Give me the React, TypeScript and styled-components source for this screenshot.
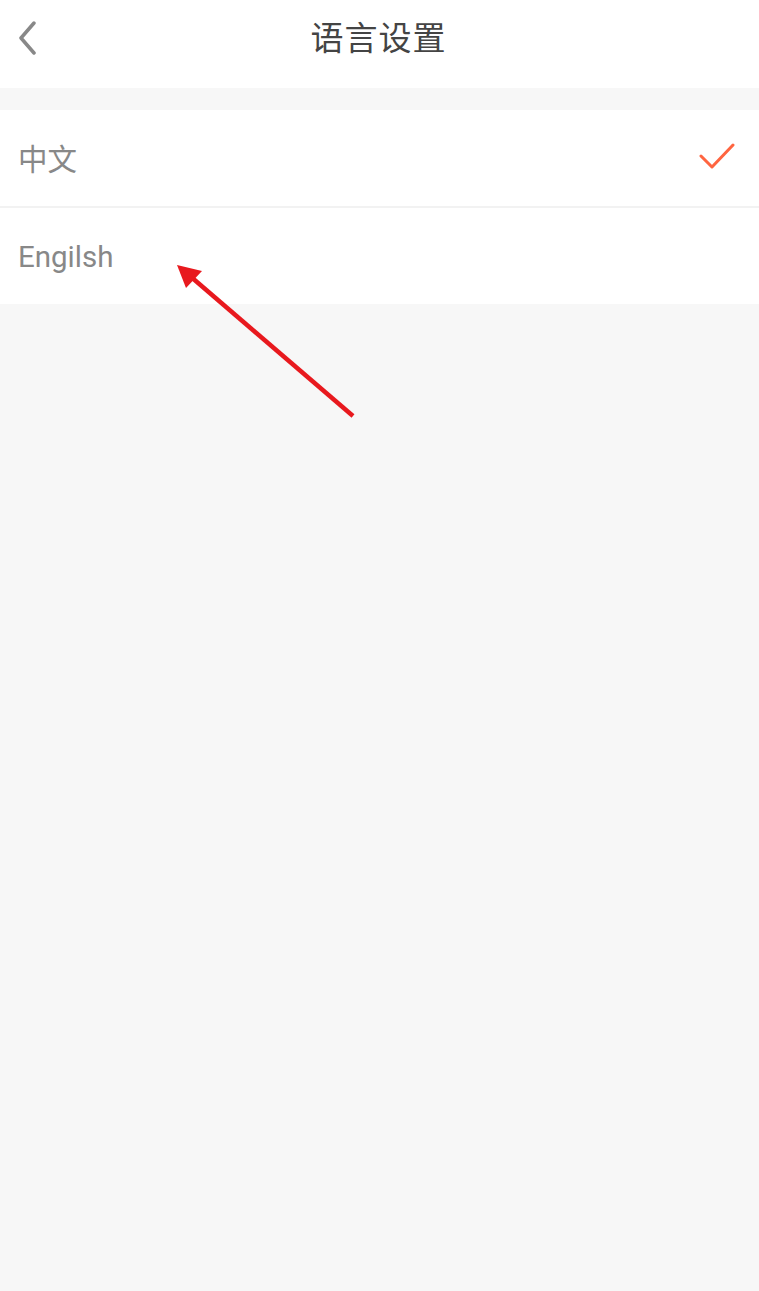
import React from 'react';
import styled, { createGlobalStyle } from 'styled-components';

const GlobalStyle = createGlobalStyle`
  html, body {
    margin: 0;
    padding: 0;
    background: #f7f7f7;
  }
  body {
    font-family: Roboto, "Noto Sans CJK SC", "Noto Sans", sans-serif;
  }
`;

const Page = styled.div`
  position: relative;
  min-height: 1291px;
  background: #f7f7f7;
`;

const Header = styled.header`
  position: relative;
  height: 88px;
  background: #ffffff;
  display: flex;
  align-items: center;
  justify-content: center;
`;

const BackButton = styled.button`
  position: absolute;
  left: 10px;
  top: 18px;
  width: 34px;
  height: 40px;
  padding: 0;
  border: none;
  background: transparent;
  display: flex;
  align-items: center;
  justify-content: center;
`;

const Title = styled.h1`
  margin: 0 0 0 -2px;
  margin-top: -16px;
  font-size: 33px;
  font-weight: 400;
  color: #444444;
  letter-spacing: 1px;
`;

const List = styled.ul`
  list-style: none;
  margin: 22px 0 0;
  padding: 0;
  background: #ffffff;
`;

const Row = styled.li<{ $last?: boolean }>`
  height: 96px;
  padding: 0 20px 0 18px;
  display: flex;
  align-items: center;
  justify-content: space-between;
  border-bottom: ${(p) => (p.$last ? 'none' : '2px solid #f2f2f2')};
`;

const Label = styled.span<{ $offset?: number }>`
  font-size: 29.5px;
  color: #888888;
  margin-top: ${(p) => p.$offset ?? 0}px;
`;

const Arrow = styled.svg`
  position: absolute;
  left: 0;
  top: 0;
  pointer-events: none;
`;

const Check = () => (
  <svg width="40" height="30" viewBox="0 0 40 30">
    <path d="M2 13 L13 24 L34 2" fill="none" stroke="#ff6540" strokeWidth="3" strokeLinecap="round" strokeLinejoin="round" />
  </svg>
);

const languages = [
  { label: '中文', selected: true, offset: -2 },
  { label: 'Engilsh', selected: false, offset: 2 },
];

export default function App() {
  return (
    <Page>
      <GlobalStyle />
      <Header>
        <BackButton aria-label="back">
          <svg width="22" height="34" viewBox="0 0 22 34">
            <path d="M18 2 L5 17 L18 32" fill="none" stroke="#888888" strokeWidth="3.5" strokeLinecap="round" strokeLinejoin="round" />
          </svg>
        </BackButton>
        <Title>语言设置</Title>
      </Header>
      <List>
        {languages.map((l, i) => (
          <Row key={l.label} $last={i === languages.length - 1}>
            <Label $offset={l.offset}>{l.label}</Label>
            {l.selected && <Check />}
          </Row>
        ))}
      </List>
      <Arrow width="759" height="1291" viewBox="0 0 759 1291">
        <line x1="353" y1="416" x2="190" y2="276" stroke="#e8191e" strokeWidth="4.5" />
        <polygon points="177,265 186,288 202,271" fill="#e8191e" />
      </Arrow>
    </Page>
  );
}
